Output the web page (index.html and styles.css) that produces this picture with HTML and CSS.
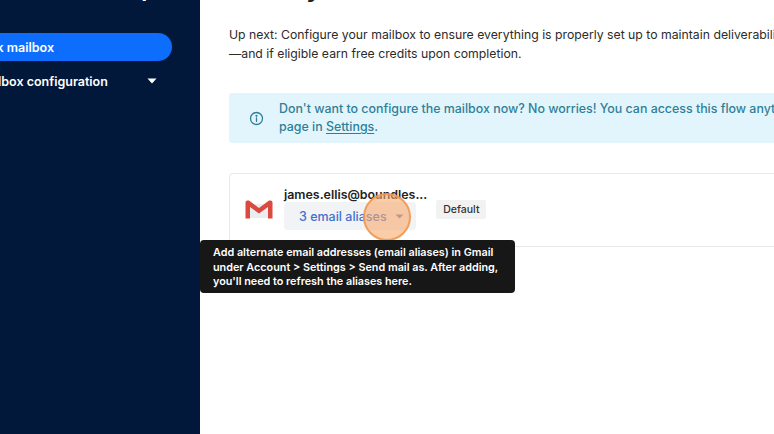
FILE: index.html
```html
<!DOCTYPE html>
<html lang="en">
<head>
    <meta charset="UTF-8">
    <meta name="viewport" content="width=device-width, initial-scale=1.0">
    <title>Check mailbox</title>
    <link rel="stylesheet" href="styles.css">
</head>
<body>
    <div class="page">
        <aside class="sidebar">
            <div class="sidebar-title">Mailbox setup</div>
            <a class="nav-item active">Check mailbox</a>
            <a class="nav-item nav-sub">
                <span>Mailbox configuration</span>
                <svg class="nav-caret" width="10" height="6" viewBox="0 0 10 6"><path d="M0.5 0.5h9L5 5.5z" fill="#fff"/></svg>
            </a>
        </aside>
        <main class="main">
            <h1>Already connected</h1>
            <p class="intro">Up next: Configure your mailbox to ensure everything is properly set up to maintain deliverability<br>—and if eligible earn free credits upon completion.</p>
            <div class="banner">
                <svg class="banner-icon" width="15" height="15" viewBox="0 0 15 15" fill="none" stroke="#2f7f99" stroke-width="1.3">
                    <circle cx="7.5" cy="7.5" r="6"/>
                    <path d="M7.5 7v3.4" stroke-linecap="round"/>
                    <circle cx="7.5" cy="4.8" r="0.5"/>
                </svg>
                <div class="banner-text">Don't want to configure the mailbox now? No worries! You can access this flow anytime from the mailbox<br>page in <a class="banner-link">Settings</a>.</div>
            </div>
            <div class="card">
                <svg class="gmail" width="28" height="20" viewBox="0 0 28 20">
                    <path d="M3 4h22v14H3z" fill="#e9eef0"/>
                    <path d="M0.500 18.500V2.500Q0.500 0.500 2.500 0.500H4L14 8 24 0.500h1.500Q27.500 0.500 27.500 2.500V18.500H23V7L14 13.500 5 7V18.500z" fill="#dc4a3f"/>
                </svg>
                <div class="account">
                    <div class="email">james.ellis@boundles...</div>
                    <button class="alias-btn">
                        <span>3 email aliases</span>
                        <svg width="9" height="5" viewBox="0 0 9 5"><path d="M0.500 0.500h8L4.500 4.500z" fill="#6c7fa8"/></svg>
                    </button>
                </div>
                <span class="badge">Default</span>
            </div>
        </main>
    </div>
    <div class="highlight"></div>
    <div class="tooltip">Add alternate email addresses (email aliases) in Gmail<br>under Account &gt; Settings &gt; Send mail as. After adding,<br>you'll need to refresh the aliases here.</div>
</body>
</html>
```

FILE: styles.css
```css
html, body {
    margin: 0;
    height: 100%;
    overflow: hidden;
    background-color: white;
}

body {
    font-family: Inter, "Liberation Sans", sans-serif;
    color: #222;
}

.page {
    display: flex;
    height: 434px;
    width: 774px;
    overflow: hidden;
}

.sidebar {
    width: 200px;
    flex-shrink: 0;
    box-sizing: border-box;
    background-color: #01183a;
    color: white;
    overflow: hidden;
    padding-right: 28px;
}

.sidebar-title {
    font-size: 20px;
    font-weight: 700;
    line-height: 24px;
    height: 33px;
    margin-top: -22px;
    margin-bottom: 22px;
    text-align: right;
    padding-right: 18px;
}

.nav-item {
    display: flex;
    align-items: center;
    justify-content: space-between;
    height: 28px;
    margin-left: -60px;
    padding: 0 15px 0 25px;
    border-radius: 14px;
    font-size: 12.5px;
    font-weight: 600;
    white-space: nowrap;
}

.nav-sub {
    margin-top: 6px;
    padding-left: 36px;
}

.nav-item.active {
    background-color: #0d6efd;
}

.main {
    flex: 1;
    min-width: 0;
    padding-left: 29px;
    overflow: hidden;
}

h1 {
    margin: -24px 0 0;
    font-size: 24px;
    line-height: 26px;
    font-weight: 700;
    white-space: nowrap;
}

.intro {
    margin: 23px 0 0;
    font-size: 12.25px;
    line-height: 19px;
    white-space: nowrap;
    color: #2b2b2b;
}

.banner {
    display: flex;
    align-items: center;
    width: 620px;
    height: 50px;
    margin-top: 30px;
    background-color: #e3f5fc;
    border-radius: 3px;
    color: #2f7f99;
    font-size: 12.4px;
    line-height: 18px;
    font-weight: 500;
    white-space: nowrap;
}

.banner-icon {
    margin: 0 15px 0 20px;
    flex-shrink: 0;
}

.banner-link {
    text-decoration: underline;
    text-underline-offset: 2px;
}

.card {
    display: flex;
    align-items: center;
    width: 620px;
    height: 74px;
    box-sizing: border-box;
    margin-top: 30px;
    padding-left: 15px;
    border: 1px solid #e9e9e9;
    border-radius: 4px;
}

.gmail {
    flex-shrink: 0;
    margin-right: 11px;
}

.account {
    display: flex;
    flex-direction: column;
    margin-bottom: 3px;
}

.email {
    font-size: 12.4px;
    font-weight: 600;
    line-height: 15px;
    color: #222;
}

.alias-btn {
    display: flex;
    align-items: center;
    gap: 8px;
    width: 132px;
    height: 28px;
    padding: 0 0 0 15px;
    border: none;
    border-radius: 4px;
    background-color: #f2f3f5;
    color: #4172cf;
    font-family: inherit;
    font-size: 12.5px;
    font-weight: 500;
}

.badge {
    margin-left: 9px;
    margin-top: -2px;
    padding: 0 7px;
    height: 19px;
    line-height: 19px;
    background-color: #f2f2f2;
    border-radius: 2px;
    font-size: 10.5px;
    font-weight: 500;
    color: #333;
}

.highlight {
    position: absolute;
    left: 363px;
    top: 193px;
    width: 44px;
    height: 44px;
    border: 2px solid rgba(240, 150, 80, 0.85);
    border-radius: 50%;
    background-color: rgba(248, 170, 110, 0.6);
}

.tooltip {
    position: absolute;
    left: 200px;
    top: 240px;
    width: 315px;
    height: 53px;
    box-sizing: border-box;
    padding: 6px 13px;
    background-color: #171717;
    border-radius: 4px;
    color: white;
    font-size: 10.8px;
    font-weight: 600;
    line-height: 14.5px;
    white-space: nowrap;
}
```
